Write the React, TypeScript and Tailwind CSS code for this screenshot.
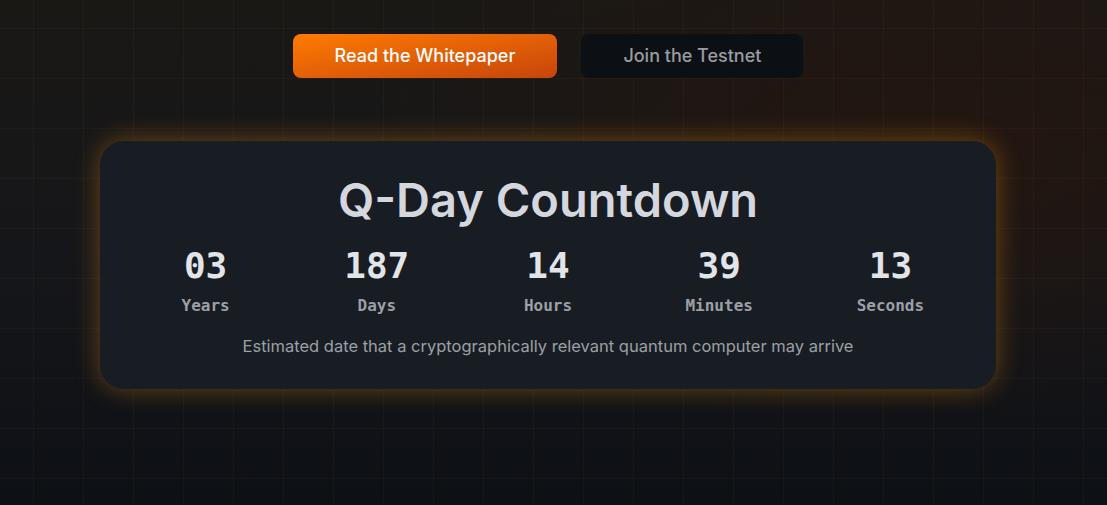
const units = [
  { value: "03", label: "Years" },
  { value: "187", label: "Days" },
  { value: "14", label: "Hours" },
  { value: "39", label: "Minutes" },
  { value: "13", label: "Seconds" },
];

export default function App() {
  return (
    <div className="min-h-screen bg-[#0d1015] bg-[radial-gradient(ellipse_75%_80%_at_85%_30%,rgba(38,22,14,0.8),transparent_70%),linear-gradient(to_bottom,#1a1815_0%,#15161a_55%,#0d1015_100%)] font-['Inter',sans-serif]">
      <div className="min-h-screen pr-[11px] bg-[linear-gradient(rgba(255,140,50,0.045)_1px,transparent_1px),linear-gradient(90deg,rgba(255,140,50,0.045)_1px,transparent_1px)] bg-[size:50px_50px] bg-[position:33px_28px]">
        <div className="flex justify-center gap-6 pt-[34px]">
          <button className="rounded-lg bg-gradient-to-br from-[#ff7b00] to-[#c7450a] px-[42px] py-2.5 text-lg font-medium leading-6 text-white">
            Read the Whitepaper
          </button>
          <button className="rounded-lg bg-[#0c0f14] px-[42px] py-2.5 text-lg font-medium leading-6 text-[#9a9ca0]">
            Join the Testnet
          </button>
        </div>

        <div className="mx-auto mt-[63px] max-w-4xl rounded-3xl bg-[#181c23] px-5 pt-[35px] pb-[31px] text-center shadow-[0_0_26px_rgba(225,135,20,0.42)]">
          <h1 className="text-[47px] font-semibold leading-[48px] text-[#d4d7dd]">
            Q-Day Countdown
          </h1>
          <div className="mt-[22px] grid grid-cols-5 font-['DejaVu_Sans_Mono',monospace]">
            {units.map((u) => (
              <div key={u.label} className="flex flex-col items-center">
                <span className="text-4xl font-bold leading-10 text-[#e2e4e8]">{u.value}</span>
                <span className="mt-2 text-base font-bold leading-6 text-[#9ca0a6]">{u.label}</span>
              </div>
            ))}
          </div>
          <p className="mt-4 text-[16.5px] leading-6 text-[#9ca0a6]">
            Estimated date that a cryptographically relevant quantum computer may arrive
          </p>
        </div>
      </div>
    </div>
  );
}
